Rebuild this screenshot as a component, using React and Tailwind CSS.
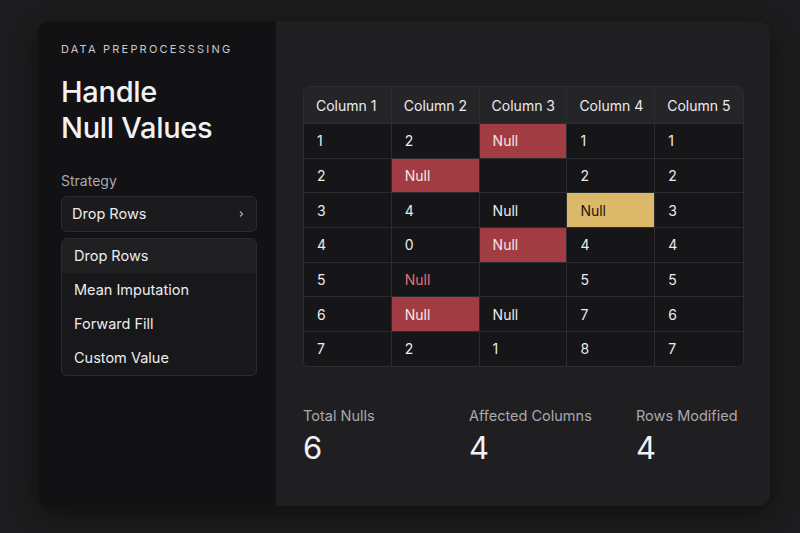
const columns = ['Column 1', 'Column 2', 'Column 3', 'Column 4', 'Column 5'];

// cell: plain value, or { v, t } where t = red | yellow | redText
const rows = [
  ['1', '2', { v: 'Null', t: 'red' }, '1', '1'],
  ['2', { v: 'Null', t: 'red' }, '', '2', '2'],
  ['3', '4', 'Null', { v: 'Null', t: 'yellow' }, '3'],
  ['4', '0', { v: 'Null', t: 'red' }, '4', '4'],
  ['5', { v: 'Null', t: 'redText' }, '', '5', '5'],
  ['6', { v: 'Null', t: 'red' }, 'Null', '7', '6'],
  ['7', '2', '1', '8', '7'],
];

const options = ['Drop Rows', 'Mean Imputation', 'Forward Fill', 'Custom Value'];

const stats = [
  { label: 'Total Nulls', value: '6' },
  { label: 'Affected Columns', value: '4' },
  { label: 'Rows Modified', value: '4' },
];

function Cell({ cell, last }) {
  const c = typeof cell === 'string' ? { v: cell } : cell;
  let cls = 'bg-[#161618] text-[#ececee]';
  if (c.t === 'red') cls = 'bg-[#a23c43] text-[#f4e6e7]';
  if (c.t === 'yellow') cls = 'bg-[#dbb968] text-[#1a1710]';
  if (c.t === 'redText') cls = 'bg-[#161618] text-[#e0707c]';
  return (
    <div
      className={`h-[34.7px] flex items-center pl-[13px] text-[14px] border-t border-[#2c2c30] ${last ? '' : 'border-r'} ${cls}`}
    >
      {c.v}
    </div>
  );
}

export default function App() {
  return (
    <div
      className="w-[800px] h-[533px] bg-[#1c1c1e] pt-[21px] pl-[38px]"
      style={{ fontFamily: 'Inter, "Noto Sans", sans-serif' }}
    >
      <div className="w-[732px] h-[485px] flex rounded-[12px] overflow-hidden shadow-[0_8px_24px_rgba(0,0,0,0.45)]">
        {/* Left: strategy */}
        <div className="w-[238px] shrink-0 bg-[#121214] pl-[23px] pr-[19px] pt-[21px]">
          <div className="text-[11px] tracking-[0.2em] text-[#c9c9cd] leading-[14px] whitespace-nowrap">DATA PREPROCESSSING</div>
          <h1 className="mt-[18px] text-[29px] font-medium leading-[36px] text-[#f2f2f4] tracking-[-0.01em]">
            Handle
            <br />
            Null Values
          </h1>
          <div className="mt-[26px] text-[14px] text-[#a9a9ae] leading-[18px]">Strategy</div>
          <div className="mt-[6px] h-[36px] rounded-[6px] border border-[#2c2c30] bg-[#1b1b1e] flex items-center justify-between pl-[10px] pr-[11px]">
            <span className="text-[14.5px] text-[#ececee]">Drop Rows</span>
            <svg width="8" height="8" viewBox="0 0 8 8" fill="none" stroke="#a0a0a6" strokeWidth="1.3">
              <path d="M3 1.5 L5.5 4 L3 6.5" />
            </svg>
          </div>
          <div className="mt-[6px] rounded-[6px] border border-[#2c2c30] bg-[#18181b] overflow-hidden">
            {options.map((o, i) => (
              <div
                key={o}
                className={`h-[34px] flex items-center pl-[12px] text-[14.5px] text-[#ececee] ${i === 0 ? 'bg-[#202023]' : ''}`}
              >
                {o}
              </div>
            ))}
          </div>
        </div>

        {/* Right: table and stats */}
        <div className="flex-1 min-w-0 bg-[#1f1f21] pl-[27px] pr-[26px] pt-[65px]">
          <div className="rounded-[6px] border border-[#2c2c30] overflow-hidden grid grid-cols-5">
            {columns.map((c, i) => (
              <div
                key={c}
                className={`h-[36px] flex items-center pl-[12px] text-[14px] bg-[#252528] text-[#ececee] border-[#2c2c30] ${i < 4 ? 'border-r' : ''}`}
              >
                {c}
              </div>
            ))}
            {rows.map((r, ri) =>
              r.map((cell, ci) => <Cell key={`${ri}-${ci}`} cell={cell} last={ci === 4} />)
            )}
          </div>

          <div className="mt-[40px] grid grid-cols-[166px_167px_1fr]">
            {stats.map((s) => (
              <div key={s.label} className="whitespace-nowrap">
                <div className="text-[14.5px] text-[#a9a9ae] leading-[18px]">{s.label}</div>
                <div className="mt-[5px] text-[31px] text-[#f2f2f4] leading-[36px]">{s.value}</div>
              </div>
            ))}
          </div>
        </div>
      </div>
    </div>
  );
}
